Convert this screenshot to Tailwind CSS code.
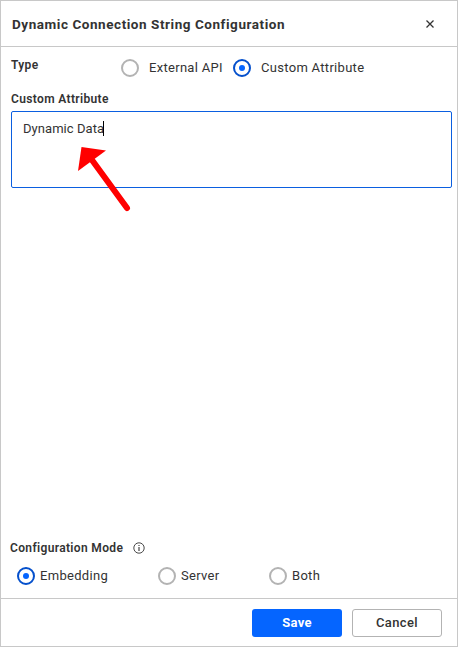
<!DOCTYPE html>
<html lang="en">
<head>
<meta charset="utf-8">
<title>Dynamic Connection String Configuration</title>
<script src="https://cdn.jsdelivr.net/npm/@tailwindcss/browser@4"></script>
</head>
<body class="bg-white font-['Roboto',sans-serif] text-[#333]">
<div class="relative flex h-[647px] w-[458px] flex-col overflow-hidden border border-[#c8c8c8] bg-white">
  <header class="flex h-[46px] shrink-0 items-center justify-between border-b border-[#c8c8c8] pr-[23px] pl-[11px]">
    <h1 class="pt-px text-[13.5px] leading-5 font-bold tracking-[0.55px] whitespace-nowrap">Dynamic Connection String Configuration</h1>
    <svg class="size-[8px]" viewBox="0 0 8 8" fill="none" stroke="#333" stroke-width="1.3"><path d="M.5 .5l7 7M7.5 .5l-7 7"/></svg>
  </header>

  <main class="flex grow flex-col">
    <div class="flex h-[42px] items-start pt-3 pl-[10px]">
      <span class="-mt-[3px] w-[110px] text-[12px] leading-[18px] font-semibold tracking-[0.35px]">Type</span>
      <label class="flex w-[112px] items-center gap-[10px]">
        <span class="size-[18px] shrink-0 rounded-full border-2 border-[#b3b3b3]"></span>
        <span class="text-[13px] leading-[18px] tracking-[0.3px] whitespace-nowrap">External API</span>
      </label>
      <label class="flex items-center gap-[10px]">
        <span class="flex size-[18px] shrink-0 items-center justify-center rounded-full border-2 border-[#0550cc]"><span class="size-[6px] rounded-full bg-[#0565ff]"></span></span>
        <span class="text-[13px] leading-[18px] tracking-[0.3px] whitespace-nowrap">Custom Attribute</span>
      </label>
    </div>
    <div class="pr-[5px] pl-[10px]">
      <div class="h-[22px] text-[12px] leading-[20px] font-semibold tracking-[0.35px]">Custom Attribute</div>
      <div class="flex h-[77px] items-start rounded-[2px] border border-[#0b5fe0] pt-[9px] pl-[11px]">
        <span class="w-[80px] text-[13px] leading-4 tracking-[0.05px] whitespace-nowrap">Dynamic Data</span>
        <span class="h-[15px] w-px bg-black"></span>
      </div>
    </div>
    <div class="mt-auto h-[59px] pl-[9px]">
      <div class="flex h-[18px] items-center gap-[10px]">
        <span class="w-[113px] text-[12px] leading-[18px] font-semibold tracking-[0.35px] whitespace-nowrap">Configuration Mode</span>
        <svg class="size-3" viewBox="0 0 12 12" fill="none" stroke="#333"><circle cx="6" cy="6" r="5.2" stroke-width=".9"/><path d="M6 5v4M6 3v1.1" stroke-width="1.1"/></svg>
      </div>
      <div class="flex pt-[10px] pl-[7px]">
        <label class="flex w-[141px] items-center gap-[5px]">
          <span class="flex size-[18px] shrink-0 items-center justify-center rounded-full border-2 border-[#0550cc]"><span class="size-[6px] rounded-full bg-[#0565ff]"></span></span>
          <span class="text-[13px] leading-[18px] tracking-[0.3px]">Embedding</span>
        </label>
        <label class="flex w-[111px] items-center gap-[5px]">
          <span class="size-[18px] shrink-0 rounded-full border-2 border-[#b3b3b3]"></span>
          <span class="text-[13px] leading-[18px] tracking-[0.3px]">Server</span>
        </label>
        <label class="flex items-center gap-[5px]">
          <span class="size-[18px] shrink-0 rounded-full border-2 border-[#b3b3b3]"></span>
          <span class="text-[13px] leading-[18px] tracking-[0.3px]">Both</span>
        </label>
      </div>
    </div>
  </main>

  <footer class="flex h-[48px] shrink-0 justify-end gap-[10px] border-t border-[#c8c8c8] pt-[10px] pr-[15px]">
    <button class="h-7 w-[90px] rounded-[3px] bg-[#0565ff] text-[13px] leading-7 font-bold tracking-[0.3px] text-white">Save</button>
    <button class="h-7 w-[90px] rounded-[3px] border border-[#b3b3b3] bg-white text-[13px] leading-[26px] font-medium tracking-[0.4px]">Cancel</button>
  </footer>

  <svg class="absolute top-[139px] left-[69px] h-[80px] w-[70px]" viewBox="0 0 70 80"><path d="M22 20L57 68" stroke="red" stroke-width="6" stroke-linecap="round"/><path d="M11.5 7L36 10.5L8 31Z" fill="red"/></svg>
</div>
</body>
</html>
